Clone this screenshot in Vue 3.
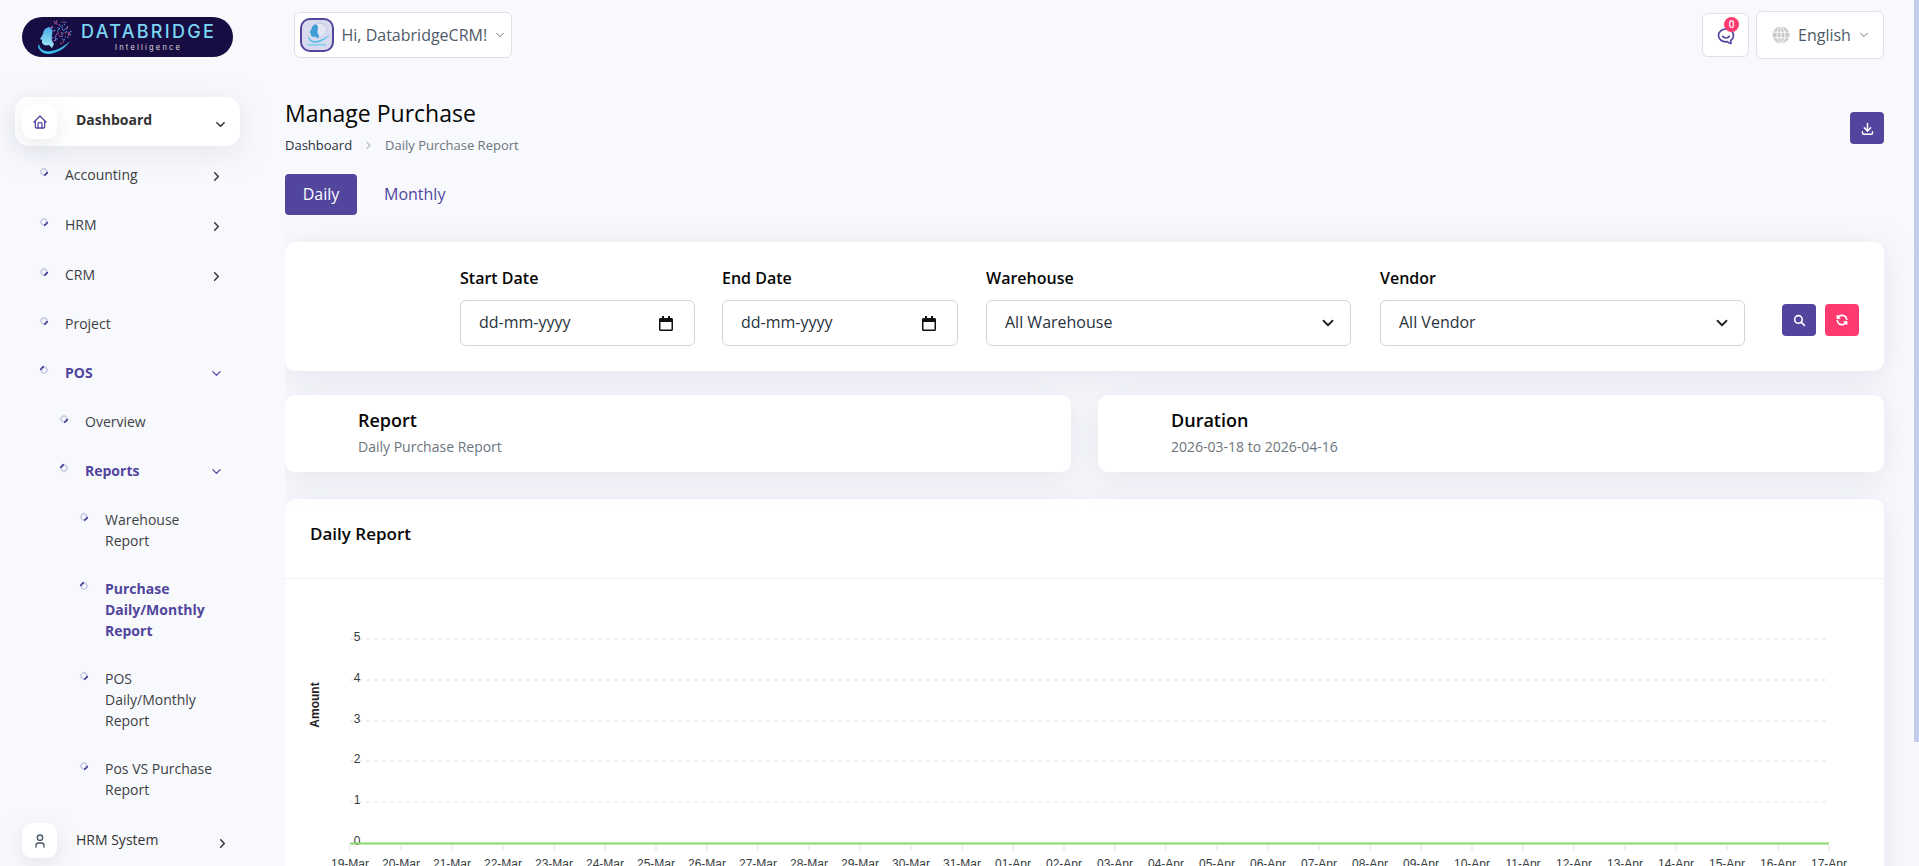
<script setup>
const navItems = [
  { label: 'Accounting', level: 1, arrow: 'right' },
  { label: 'HRM', level: 1, arrow: 'right' },
  { label: 'CRM', level: 1, arrow: 'right' },
  { label: 'Project', level: 1 },
  { label: 'POS', level: 1, arrow: 'down', active: true },
  { label: 'Overview', level: 2 },
  { label: 'Reports', level: 2, arrow: 'down', active: true },
  { label: 'Warehouse Report', level: 3 },
  { label: 'Purchase Daily/Monthly Report', level: 3, active: true },
  { label: 'POS Daily/Monthly Report', level: 3 },
  { label: 'Pos VS Purchase Report', level: 3 },
]

const filters = [
  { label: 'Start Date', value: 'dd-mm-yyyy', type: 'date' },
  { label: 'End Date', value: 'dd-mm-yyyy', type: 'date' },
  { label: 'Warehouse', value: 'All Warehouse', type: 'select' },
  { label: 'Vendor', value: 'All Vendor', type: 'select' },
]

// x axis of the chart: 19-Mar to 17-Apr
const days = []
for (let d = 19; d <= 31; d++) days.push(d + '-Mar')
for (let d = 1; d <= 17; d++) days.push(String(d).padStart(2, '0') + '-Apr')

const chartLeft = 65
const chartStep = 51
const gridY = [60, 101, 142, 182, 223]

// speckles of the logo head, scattered inside a circle
const logoDots = []
let seed = 17
const rand = () => {
  seed = (seed * 1103 + 12345) % 65536
  return seed / 65536
}
for (let i = 0; i < 90; i++) {
  const a = rand() * Math.PI * 2
  const r = Math.sqrt(rand()) * 12.5
  const x = 36.5 + Math.cos(a) * r
  const y = 15 + Math.sin(a) * r
  if (x < 29) continue
  logoDots.push({ x, y, red: i % 3 === 0 })
}
</script>

<template>
  <div class="shell">
    <aside class="sidebar">
      <div class="logo">
        <svg width="211" height="40" viewBox="0 0 211 40">
          <defs>
            <linearGradient id="headFill" x1="0" y1="0" x2="0" y2="1">
              <stop offset="0" stop-color="#4aa9e6" />
              <stop offset="1" stop-color="#9fe8f8" />
            </linearGradient>
          </defs>
          <rect width="211" height="40" rx="20" fill="#170d43" />
          <circle
            v-for="(dot, i) in logoDots"
            :key="i"
            :cx="dot.x"
            :cy="dot.y"
            r="0.7"
            :fill="dot.red ? '#d9578a' : '#4f86d8'"
          />
          <path d="M27 10C23 11 21 14 21 17L18 22L20 23L20 26L22 28C24 29 26 28 27 28L30 31L32 27C30 24 29 22 30 18C31 14 30 11 27 10Z" fill="url(#headFill)" />
          <path d="M16 29C17 35 24 39 32 36C39 34 45 29 48 24C43 29 36 33 29 34C23 35 18 33 17 27Z" fill="#3cc0ea" />
          <text x="59" y="21" class="logo-name">DATABRIDGE</text>
          <text x="93" y="33" class="logo-sub">Intelligence</text>
        </svg>
      </div>

      <nav class="nav">
        <a class="nav-main nav-main-active">
          <span class="nav-icon">
            <svg width="16" height="16" viewBox="0 0 24 24" fill="none" stroke="#51459d" stroke-width="2" stroke-linecap="round" stroke-linejoin="round">
              <path d="M5 12H3l9-9 9 9h-2" />
              <path d="M5 12v7a2 2 0 0 0 2 2h10a2 2 0 0 0 2-2v-7" />
              <path d="M9 21v-6a2 2 0 0 1 2-2h2a2 2 0 0 1 2 2v6" />
            </svg>
          </span>
          <span class="nav-main-text"><b>Dashboard</b></span>
          <svg class="chev" width="11" height="11" viewBox="0 0 12 12" fill="none" stroke="#333" stroke-width="1.6" stroke-linecap="round" stroke-linejoin="round"><path d="M2 4l4 4 4-4" /></svg>
        </a>

        <ul class="nav-sub">
          <li
            v-for="item in navItems"
            :key="item.label"
            class="nav-row"
            :class="['level-' + item.level, { active: item.active }]"
          >
            <span class="bullet"></span>
            <span class="nav-label">{{ item.label }}</span>
            <svg v-if="item.arrow === 'right'" class="chev chev-right" width="11" height="11" viewBox="0 0 12 12" fill="none" stroke="#333" stroke-width="1.6" stroke-linecap="round" stroke-linejoin="round"><path d="M4 2l4 4-4 4" /></svg>
            <svg v-if="item.arrow === 'down'" class="chev" width="11" height="11" viewBox="0 0 12 12" fill="none" stroke="#51459d" stroke-width="1.4" stroke-linecap="round" stroke-linejoin="round"><path d="M2 4l4 4 4-4" /></svg>
          </li>
        </ul>

        <a class="nav-main nav-main-last">
          <span class="nav-icon">
            <svg width="16" height="16" viewBox="0 0 24 24" fill="none" stroke="#4c5866" stroke-width="2" stroke-linecap="round" stroke-linejoin="round">
              <circle cx="12" cy="7" r="4" />
              <path d="M6 21v-2a4 4 0 0 1 4-4h4a4 4 0 0 1 4 4v2" />
            </svg>
          </span>
          <span class="nav-main-text">HRM System</span>
          <svg class="chev" width="11" height="11" viewBox="0 0 12 12" fill="none" stroke="#333" stroke-width="1.6" stroke-linecap="round" stroke-linejoin="round"><path d="M4 2l4 4-4 4" /></svg>
        </a>
      </nav>
    </aside>

    <main class="main">
      <header class="topbar">
        <div class="user-btn">
          <span class="avatar">
            <svg width="30" height="30" viewBox="0 0 30 30">
              <circle cx="18" cy="10" r="7" fill="#e4e6f4" stroke="#b4c6e6" stroke-width="0.8" />
              <g transform="translate(-5 -3) scale(0.7)">
                <path d="M27 10C23 11 21 14 21 17L18 22L20 23L20 26L22 28C24 29 26 28 27 28L30 31L32 27C30 24 29 22 30 18C31 14 30 11 27 10Z" fill="#3f9fd6" />
                <path d="M16 29C17 35 24 39 32 36C39 34 45 29 48 24C43 29 36 33 29 34C23 35 18 33 17 27Z" fill="#56bfe8" />
              </g>
              <rect x="5" y="24" width="20" height="2" rx="1" fill="#8fd0ee" />
            </svg>
          </span>
          <span class="user-name">Hi, DatabridgeCRM!</span>
          <svg width="10" height="10" viewBox="0 0 12 12" fill="none" stroke="#6b7480" stroke-width="1.2" stroke-linecap="round" stroke-linejoin="round"><path d="M2 4l4 4 4-4" /></svg>
        </div>
        <div class="top-right">
          <div class="chat-btn">
            <svg width="20" height="20" viewBox="0 0 24 24" fill="none" stroke="#51459d" stroke-width="2" stroke-linecap="round" stroke-linejoin="round">
              <path d="M17.8 17.3c2-1.4 3.2-3.5 3.2-5.9C21 7.100 17 3.600 12 3.600S3 7.100 3 11.400s4 7.600 9 7.600c.7 0 1.400-.1 2-.2.700.900 2.200 2.200 4 2.200-.2-1-.4-2.400-.2-3.700z" />
              <path d="M8 12.500c2.200 2.200 5.800 2.200 8 0" />
            </svg>
            <span class="badge">0</span>
          </div>
          <div class="lang-btn">
            <svg width="18" height="18" viewBox="0 0 18 18">
              <circle cx="9" cy="9" r="8.500" fill="#c9c9c9" />
              <g fill="none" stroke="#fff" stroke-width="0.900">
                <path d="M1 6.200h16M1 11.800h16M9 .5v17" />
                <ellipse cx="9" cy="9" rx="4" ry="8.500" />
              </g>
            </svg>
            <span class="lang-name">English</span>
            <svg width="10" height="10" viewBox="0 0 12 12" fill="none" stroke="#6b7480" stroke-width="1.2" stroke-linecap="round" stroke-linejoin="round"><path d="M2 4l4 4 4-4" /></svg>
          </div>
        </div>
      </header>

      <section class="page-head">
        <div>
          <h1>Manage Purchase</h1>
          <div class="crumbs">
            <span class="crumb-link">Dashboard</span>
            <svg width="9" height="9" viewBox="0 0 12 12" fill="none" stroke="#7a828c" stroke-width="1.200" stroke-linecap="round" stroke-linejoin="round"><path d="M4 2l4 4-4 4" /></svg>
            <span class="crumb-now">Daily Purchase Report</span>
          </div>
        </div>
        <button class="icon-btn download" type="button">
          <svg width="15" height="15" viewBox="0 0 24 24" fill="none" stroke="#fff" stroke-width="2.400" stroke-linecap="round" stroke-linejoin="round">
            <path d="M4 17v2a2 2 0 0 0 2 2h12a2 2 0 0 0 2-2v-2" />
            <path d="M7 11l5 5 5-5" />
            <path d="M12 4v12" />
          </svg>
        </button>
      </section>

      <div class="tabs">
        <a class="tab tab-on">Daily</a>
        <a class="tab">Monthly</a>
      </div>

      <section class="card filter-card">
        <div v-for="f in filters" :key="f.label" class="field" :class="'field-' + f.type">
          <label>{{ f.label }}</label>
          <div class="control">
            <span class="control-value">{{ f.value }}</span>
            <svg v-if="f.type === 'date'" width="14" height="15" viewBox="0 0 14 15">
              <path d="M3 0h2v2h4V0h2v2h1.500c.8 0 1.500.7 1.500 1.500v10c0 .8-.7 1.500-1.500 1.500h-11C.7 15 0 14.300 0 13.500v-10C0 2.700.7 2 1.500 2H3zM1.500 6v7.500h11V6z" fill="#111" />
            </svg>
            <svg v-else width="12" height="12" viewBox="0 0 16 16" fill="none" stroke="#222" stroke-width="2.400" stroke-linecap="round" stroke-linejoin="round"><path d="M2 5l6 6 6-6" /></svg>
          </div>
        </div>
        <div class="filter-actions">
          <button class="icon-btn" type="button">
            <svg width="13" height="13" viewBox="0 0 24 24" fill="none" stroke="#fff" stroke-width="3" stroke-linecap="round" stroke-linejoin="round">
              <circle cx="10" cy="10" r="7" />
              <path d="M21 21l-6-6" />
            </svg>
          </button>
          <button class="icon-btn pink" type="button">
            <svg width="14" height="14" viewBox="0 0 24 24" fill="none" stroke="#fff" stroke-width="2.800" stroke-linecap="round" stroke-linejoin="round">
              <path d="M20 11A8.100 8.100 0 0 0 4.500 9M4 5v4h4" />
              <path d="M4 13a8.100 8.100 0 0 0 15.500 2m.5 4v-4h-4" />
            </svg>
          </button>
        </div>
      </section>

      <section class="summary">
        <div class="card summary-card">
          <h3>Report</h3>
          <p>Daily Purchase Report</p>
        </div>
        <div class="card summary-card">
          <h3>Duration</h3>
          <p>2026-03-18 to 2026-04-16</p>
        </div>
      </section>

      <section class="card chart-card">
        <div class="chart-head">Daily Report</div>
        <svg class="chart" width="1599" height="400" viewBox="0 0 1599 400">
          <g stroke="#e3e3e3" stroke-dasharray="4 4" stroke-width="1">
            <line v-for="y in gridY" :key="y" :x1="chartLeft" :x2="1541" :y1="y" :y2="y" />
          </g>
          <g class="axis-y">
            <text v-for="(y, i) in gridY" :key="y" x="72" :y="y + 2" text-anchor="middle">{{ 5 - i }}</text>
            <text x="72" y="266" text-anchor="middle">0</text>
          </g>
          <text class="axis-title" transform="translate(34 126) rotate(-90)" text-anchor="middle">Amount</text>
          <line :x1="chartLeft" x2="1544" y1="264.500" y2="264.500" stroke="#8bd86d" stroke-width="2" />
          <g v-for="(day, i) in days" :key="day">
            <line :x1="chartLeft + i * chartStep" :x2="chartLeft + i * chartStep" y1="266" y2="272" stroke="#e0e0e0" />
            <text class="axis-x" :x="chartLeft + i * chartStep" y="289" text-anchor="middle">{{ day }}</text>
          </g>
        </svg>
      </section>
    </main>

    <!-- page scrollbar thumb, the headless browser hides the real one -->
    <div class="scroll-thumb"></div>
  </div>
</template>

<style>
html,
body {
  margin: 0;
  height: 100%;
  overflow: hidden;
  background: #f8f9fd;
}
</style>

<style scoped>
* {
  box-sizing: border-box;
}

.shell {
  position: relative;
  display: flex;
  height: 100vh;
  font-family: 'Open Sans', 'Liberation Sans', sans-serif;
  font-size: 14px;
  line-height: 21px;
  color: #293240;
  background: #f8f9fd;
}

.scroll-thumb {
  position: absolute;
  top: 0;
  right: 0;
  width: 5px;
  height: 742px;
  background: #c3cbea;
}

.sidebar {
  width: 285px;
  flex: none;
  overflow: hidden;
  padding: 17px 0 0 15px;
}

.logo {
  height: 40px;
  padding-left: 7px;
}

.logo svg {
  display: block;
}

.logo-name {
  font-family: 'Inter', 'Liberation Sans', sans-serif;
  font-size: 18px;
  font-weight: 500;
  letter-spacing: 2.300px;
  fill: #7ad6f2;
}

.logo-sub {
  font-family: 'Inter', 'Liberation Sans', sans-serif;
  font-size: 7.500px;
  letter-spacing: 2.200px;
  fill: #ddd;
}

.nav {
  width: 225px;
  margin-top: 40px;
}

.nav-main {
  display: flex;
  align-items: center;
  height: 49px;
  padding: 0 14px 0 7px;
  border-radius: 14px;
  color: #333;
}

.nav-main-active {
  background: #fff;
  box-shadow: 0 6px 30px rgba(182, 186, 203, 0.3);
}

.nav-main-last {
  margin-top: 3px;
  padding-right: 12px;
}

.nav-icon {
  display: flex;
  align-items: center;
  justify-content: center;
  width: 35px;
  height: 35px;
  flex: none;
  border-radius: 10px;
  background: #fff;
  box-shadow: 0 6px 20px rgba(182, 186, 203, 0.3);
}

.nav-main-text {
  margin-left: 19px;
  margin-top: -5px;
  flex: 1;
}

.nav-main-last .nav-main-text {
  margin-top: -3px;
}

.nav-sub {
  list-style: none;
  margin: 4px 0 0;
  padding: 0;
}

.nav-row {
  display: flex;
  padding: 14px 18px 14px 25px;
  color: #3d3f45;
}

.nav-row:nth-child(-n + 2) {
  padding-bottom: 15px;
}

.nav-row.level-2 {
  padding-left: 45px;
}

.nav-row.level-3 {
  padding: 13.500px 25px 13.500px 65px;
}

.bullet {
  width: 8px;
  height: 8px;
  flex: none;
  margin: 4px 17px 0 0;
  border: 2px solid #cfd2e6;
  border-bottom-color: #51459d;
  border-radius: 50%;
  transform: rotate(-45deg);
}

.nav-row.active {
  color: #51459d;
  font-weight: 700;
}

.nav-row.active .bullet {
  border-bottom-color: #cfd2e6;
  border-top-color: #51459d;
}

.nav-label {
  flex: 1;
}

.chev {
  flex: none;
  margin-top: 6px;
}

.chev-right {
  margin-top: 7px;
}

.main {
  flex: 1;
  min-width: 0;
  height: 100vh;
  overflow: hidden;
  padding: 0 35px 33px 0;
}

.topbar {
  display: flex;
  align-items: center;
  justify-content: space-between;
  height: 70px;
  padding-left: 9px;
}

.user-btn,
.chat-btn,
.lang-btn {
  display: flex;
  align-items: center;
  background: #fff;
  border: 1px solid #dfe0ea;
  border-radius: 6px;
}

.user-btn {
  width: 218px;
  height: 46px;
  padding: 0 6px 0 5px;
}

.avatar {
  display: flex;
  align-items: center;
  justify-content: center;
  width: 34px;
  height: 34px;
  border: 2px solid #51459d;
  border-radius: 10px;
  background: #d9daef;
  overflow: hidden;
}

.user-name {
  margin: 0 8px 0 8px;
  font-size: 16px;
  color: #4f5a68;
  white-space: nowrap;
}

.top-right {
  display: flex;
  align-items: center;
  gap: 7px;
}

.chat-btn {
  position: relative;
  justify-content: center;
  width: 47px;
  height: 44px;
  padding-top: 2px;
}

.badge {
  position: absolute;
  top: 3px;
  right: 9px;
  width: 15px;
  height: 15px;
  border-radius: 50%;
  background: #ff3a6e;
  color: #fff;
  font-size: 10px;
  line-height: 15px;
  font-weight: 600;
  text-align: center;
}

.lang-btn {
  width: 128px;
  height: 48px;
  padding-left: 15px;
}

.lang-name {
  margin: 0 8px 0 8px;
  font-size: 16px;
  color: #4f5a68;
}

.page-head {
  display: flex;
  justify-content: space-between;
  align-items: flex-start;
  margin-top: 25px;
}

h1 {
  margin: 0;
  font-size: 23px;
  line-height: 36px;
  font-weight: 500;
  color: #060606;
}

.crumbs {
  display: flex;
  align-items: center;
  gap: 12px;
  margin-top: 4px;
  font-size: 13px;
  line-height: 20px;
}

.crumb-now {
  color: #6c757d;
}

.icon-btn {
  display: flex;
  align-items: center;
  justify-content: center;
  width: 34px;
  height: 32px;
  padding: 0;
  border: 0;
  border-radius: 4px;
  background: #51459d;
}

.icon-btn.pink {
  background: #ff3a6e;
}

.download {
  margin-top: 17px;
}

.tabs {
  display: flex;
  margin-top: 19px;
}

.tab {
  height: 41px;
  padding: 0 27px;
  border-radius: 4px;
  font-size: 16px;
  line-height: 41px;
  color: #51459d;
}

.tab-on {
  width: 72px;
  padding: 0;
  text-align: center;
  background: #51459d;
  color: #fff;
}

.card {
  background: #fff;
  border-radius: 10px;
  box-shadow: 0 6px 30px rgba(182, 186, 203, 0.3);
}

.filter-card {
  display: flex;
  justify-content: flex-end;
  align-items: flex-end;
  gap: 28px;
  height: 129px;
  margin-top: 27px;
  padding: 25px;
}

.field label {
  display: block;
  height: 22px;
  margin-bottom: 11px;
  font-size: 16px;
  line-height: 22px;
  font-weight: 600;
  color: #060606;
}

.field-date {
  width: 236px;
}

.field-date:first-child {
  width: 235px;
  margin-right: -1px;
}

.field-select {
  width: 365px;
}

.field-select + .field-select {
  margin-left: 1px;
}

.control {
  display: flex;
  align-items: center;
  justify-content: space-between;
  height: 46px;
  padding: 0 21px 0 18px;
  border: 1px solid #d1d3dc;
  border-radius: 6px;
  background: #fff;
  font-size: 16px;
  color: #293240;
}

.field-select .control {
  padding-right: 16px;
}

.control-value {
  margin-top: -2px;
}

.filter-actions {
  display: flex;
  gap: 9px;
  margin: 0 0 10px 9px;
}

.summary {
  display: flex;
  gap: 27px;
  margin-top: 24px;
}

.summary-card {
  flex: 1;
  height: 77px;
  padding: 12px 73px;
}

.summary-card h3 {
  margin: 0;
  font-size: 18px;
  line-height: 26px;
  font-weight: 600;
  color: #060606;
}

.summary-card p {
  margin: 3px 0 0;
  font-size: 14px;
  line-height: 21px;
  color: #6c757d;
}

.chart-card {
  margin-top: 27px;
}

.chart-head {
  height: 80px;
  padding-left: 25px;
  border-bottom: 1px solid #f1f1f1;
  font-size: 17px;
  line-height: 70px;
  font-weight: 600;
  color: #060606;
}

.chart {
  display: block;
}

.chart text {
  font-family: 'Liberation Sans', Arial, sans-serif;
  font-size: 12px;
  fill: #373d3f;
}

.chart .axis-title {
  font-weight: 700;
  fill: #222;
}
</style>
